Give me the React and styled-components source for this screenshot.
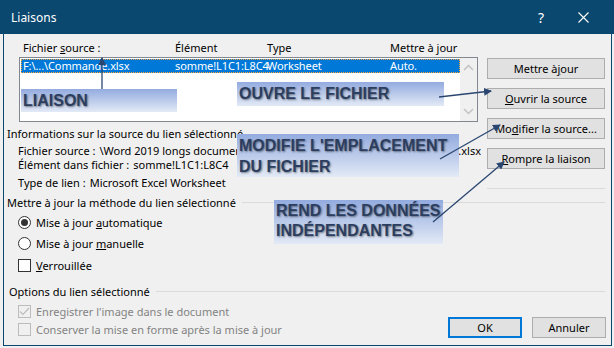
import React from 'react';
import styled, { createGlobalStyle } from 'styled-components';

const GlobalStyle = createGlobalStyle`
  html, body {
    margin: 0;
    padding: 0;
    background: #f0f0f0;
  }
  body {
    font-family: "Noto Sans", "Segoe UI", sans-serif;
    font-size: 11px;
    color: #000;
  }
`;

const Window = styled.div`
  position: relative;
  width: 614px;
  height: 348px;
  display: flex;
  flex-direction: column;
  background: #f0f0f0;
  overflow: hidden;
`;

const TitleBar = styled.div`
  height: 34px;
  flex: none;
  background: #0a4870;
  color: #fff;
  display: flex;
  align-items: center;
  padding: 0 10px 0 11px;
`;

const Title = styled.span`
  flex: 1;
  font-size: 12px;
`;

const TitleButton = styled.span`
  width: 42px;
  display: flex;
  justify-content: center;
  font-size: 14px;
`;

const Frame = styled.div`
  flex: 1;
  margin: 0 2px 2px 3px;
  border: 1px solid #0a4870;
  border-top: none;
  padding: 6px 6px 0 3px;
  display: flex;
  flex-direction: column;
`;

const TopArea = styled.div`
  display: flex;
  height: 152px;
`;

const LeftCol = styled.div`
  width: 471px;
  display: flex;
  flex-direction: column;
`;

const Columns = styled.div`
  display: grid;
  grid-template-columns: 152px 92px 123px auto;
  padding-left: 4px;
  height: ${p => p.$height || 16}px;
  line-height: ${p => p.$height || 16}px;
  white-space: nowrap;
`;

const Header = styled(Columns)`
  margin-left: 12px;
`;

const ListBox = styled.div`
  margin: 1px 0 0 12px;
  width: 459px;
  height: 65px;
  box-sizing: border-box;
  border: 1px solid #828790;
  background: #fff;
  display: flex;
`;

const Rows = styled.div`
  flex: 1;
  padding: 1px 0 0 1px;
`;

const SelectedRow = styled(Columns)`
  background: #0078d7;
  color: #fff;
  outline: 1px dotted #f7a33a;
  outline-offset: -1px;
  padding-left: 2px;
  letter-spacing: -0.1px;
`;

const ScrollBar = styled.div`
  width: 17px;
  background: #f0f0f0;
  display: flex;
  flex-direction: column;
  justify-content: space-between;
  align-items: center;
  padding: 6px 0 6px;
`;

const InfoTitle = styled.div`
  margin-top: 4px;
  height: 16px;
  line-height: 16px;
  white-space: nowrap;
`;

const InfoRow = styled.div`
  margin: ${p => p.$top || 0}px 0 0 11px;
  height: 14px;
  line-height: 14px;
  white-space: nowrap;
  display: flex;
  width: 463px;
`;

const Value = styled.span`
  margin-left: 4px;
`;

const Spread = styled.span`
  flex: 1;
  display: flex;
  justify-content: space-between;
  margin-left: 4px;
  overflow: hidden;
`;

const ButtonCol = styled.div`
  margin-left: 9px;
  width: 118px;
  padding-top: 18px;
  display: flex;
  flex-direction: column;
  gap: 9px;
`;

const Button = styled.div`
  height: 21px;
  box-sizing: border-box;
  width: ${p => p.$width || 118}px;
  border: ${p => (p.$default ? '2px solid #0078d7' : '1px solid #adadad')};
  background: #e1e1e1;
  display: flex;
  align-items: center;
  justify-content: center;
  white-space: nowrap;
`;

const Separator = styled.div`
  margin-top: 10px;
  height: 1px;
  background: #dadada;
`;

const GroupHeader = styled.div`
  display: flex;
  align-items: center;
  margin: ${p => p.$top || 0}px 0 0 ${p => p.$left || 0}px;
  height: 16px;
  white-space: nowrap;
  &::after {
    content: '';
    flex: 1;
    height: 1px;
    background: #dadada;
    margin-left: 6px;
  }
`;

const Option = styled.div`
  display: flex;
  align-items: center;
  gap: 5px;
  margin: ${p => p.$top || 0}px 0 0 11px;
  height: 16px;
  white-space: nowrap;
  color: ${p => (p.$disabled ? '#838383' : '#000')};
`;

const Radio = styled.span`
  width: 13px;
  height: 13px;
  box-sizing: border-box;
  border-radius: 50%;
  border: 1px solid #333;
  background: #fff;
  display: flex;
  align-items: center;
  justify-content: center;
  &::after {
    content: '';
    width: 7px;
    height: 7px;
    border-radius: 50%;
    background: ${p => (p.$checked ? '#333' : 'transparent')};
  }
`;

const Box = styled.span`
  width: 13px;
  height: 13px;
  box-sizing: border-box;
  border: 1px solid ${p => (p.$disabled ? '#bcbcbc' : '#333')};
  background: ${p => (p.$disabled ? '#f0f0f0' : '#fff')};
  display: flex;
  align-items: center;
  justify-content: center;
`;

const BottomArea = styled.div`
  display: flex;
  justify-content: space-between;
  align-items: flex-end;
`;

const OptionList = styled.div`
  display: flex;
  flex-direction: column;
`;

const FooterButtons = styled.div`
  display: flex;
  gap: 10px;
  margin: 0 -1px -1px 0;
`;

const Note = styled.div`
  position: absolute;
  left: ${p => p.$x}px;
  top: ${p => p.$y}px;
  width: ${p => p.$w}px;
  height: ${p => p.$h}px;
  box-sizing: border-box;
  padding: ${p => p.$pad || '0 2px'};
  background: linear-gradient(to bottom, #93abdf, #e3eaf6);
  font-family: "Liberation Sans", Arial, sans-serif;
  font-weight: bold;
  font-size: 16px;
  line-height: ${p => p.$lh || 22}px;
  color: #2c3e5f;
  text-shadow: 1px 1px 2px rgba(0, 0, 0, 0.45);
  white-space: nowrap;
`;

const Arrows = styled.svg`
  position: absolute;
  left: 0;
  top: 0;
  pointer-events: none;
`;

const Chevron = ({ up }) => (
  <svg width="11" height="7" viewBox="0 0 11 7">
    <path d={up ? 'M1 6 L5.5 1.5 L10 6' : 'M1 1 L5.5 5.5 L10 1'} fill="none" stroke="#c2c2c2" strokeWidth="1.5" />
  </svg>
);

const arrows = [
  [102, 89, 102, 58],
  [439, 97, 491, 91],
  [440, 159, 500, 125],
  [433, 222, 504, 162],
];

export default function App() {
  return (
    <>
      <GlobalStyle />
      <Window>
        <TitleBar>
          <Title>Liaisons</Title>
          <TitleButton>?</TitleButton>
          <TitleButton>
            <svg width="11" height="11" viewBox="0 0 11 11">
              <path d="M0.5 0.5 L10.5 10.5 M10.5 0.5 L0.5 10.5" stroke="#fff" strokeWidth="1.1" />
            </svg>
          </TitleButton>
        </TitleBar>
        <Frame>
          <TopArea>
            <LeftCol>
              <Header>
                <span>Fichier <u>s</u>ource :</span>
                <span>Élément</span>
                <span>Type</span>
                <span>Mettre à jour</span>
              </Header>
              <ListBox>
                <Rows>
                  <SelectedRow $height={14}>
                    <span>F:\...\Commande.xlsx</span>
                    <span>somme!L1C1:L8C4</span>
                    <span>Worksheet</span>
                    <span>Auto.</span>
                  </SelectedRow>
                </Rows>
                <ScrollBar>
                  <Chevron up />
                  <Chevron />
                </ScrollBar>
              </ListBox>
              <InfoTitle>Informations sur la source du lien sélectionné</InfoTitle>
              <InfoRow $top={2}>
                Fichier source :
                <Spread>
                  <span>\Word 2019 longs documents</span>
                  <span>\Commande.xlsx</span>
                </Spread>
              </InfoRow>
              <InfoRow>
                Élément dans fichier :<Value>somme!L1C1:L8C4</Value>
              </InfoRow>
              <InfoRow $top={4}>
                Type de lien :<Value>Microsoft Excel Worksheet</Value>
              </InfoRow>
            </LeftCol>
            <ButtonCol>
              <Button>Mettre à <u>j</u>our</Button>
              <Button><u>O</u>uvrir la source</Button>
              <Button>Mo<u>d</u>ifier la source...</Button>
              <Button><u>R</u>ompre la liaison</Button>
              <Separator />
            </ButtonCol>
          </TopArea>
          <GroupHeader $top={2}>Mettre à jour la méthode du lien sélectionné</GroupHeader>
          <Option $top={4}>
            <Radio $checked />
            <span>Mise à jour <u>a</u>utomatique</span>
          </Option>
          <Option $top={5}>
            <Radio />
            <span>Mise à jour <u>m</u>anuelle</span>
          </Option>
          <Option $top={6}>
            <Box />
            <span><u>V</u>errouillée</span>
          </Option>
          <GroupHeader $top={10} $left={2}>Options du lien sélectionné</GroupHeader>
          <BottomArea>
            <OptionList>
              <Option $top={4} $disabled>
                <Box $disabled>
                  <svg width="11" height="9" viewBox="0 0 11 9">
                    <path d="M1 4.5 L4 7.5 L10 1" fill="none" stroke="#bcbcbc" strokeWidth="1.2" />
                  </svg>
                </Box>
                <span>Enregistrer l'image dans le document</span>
              </Option>
              <Option $top={2} $disabled>
                <Box $disabled />
                <span>Conserver la mise en forme après la mise à jour</span>
              </Option>
            </OptionList>
            <FooterButtons>
              <Button $default $width={74}>OK</Button>
              <Button $width={74}>Annuler</Button>
            </FooterButtons>
          </BottomArea>
        </Frame>

        <Note $x={21} $y={89} $w={156} $h={23} $lh={23}>LIAISON</Note>
        <Note $x={237} $y={82} $w={207} $h={24} $lh={24}>OUVRE LE FICHIER</Note>
        <Note $x={237} $y={134} $w={222} $h={43} $lh={21} $pad="1px 2px">
          MODIFIE L'EMPLACEMENT<br />DU FICHIER
        </Note>
        <Note $x={274} $y={200} $w={169} $h={44} $lh={20} $pad="1px 2px">
          REND LES DONNÉES<br />INDÉPENDANTES
        </Note>

        <Arrows width="614" height="348" viewBox="0 0 614 348">
          <defs>
            <marker id="head" markerWidth="8" markerHeight="8" refX="7" refY="4" orient="auto" markerUnits="userSpaceOnUse">
              <path d="M0 0 L8 4 L0 8 Z" fill="#2a4670" />
            </marker>
          </defs>
          {arrows.map(([x1, y1, x2, y2], i) => (
            <line key={i} x1={x1} y1={y1} x2={x2} y2={y2} stroke="#2a4670" strokeWidth="1.3" markerEnd="url(#head)" />
          ))}
        </Arrows>
      </Window>
    </>
  );
}
